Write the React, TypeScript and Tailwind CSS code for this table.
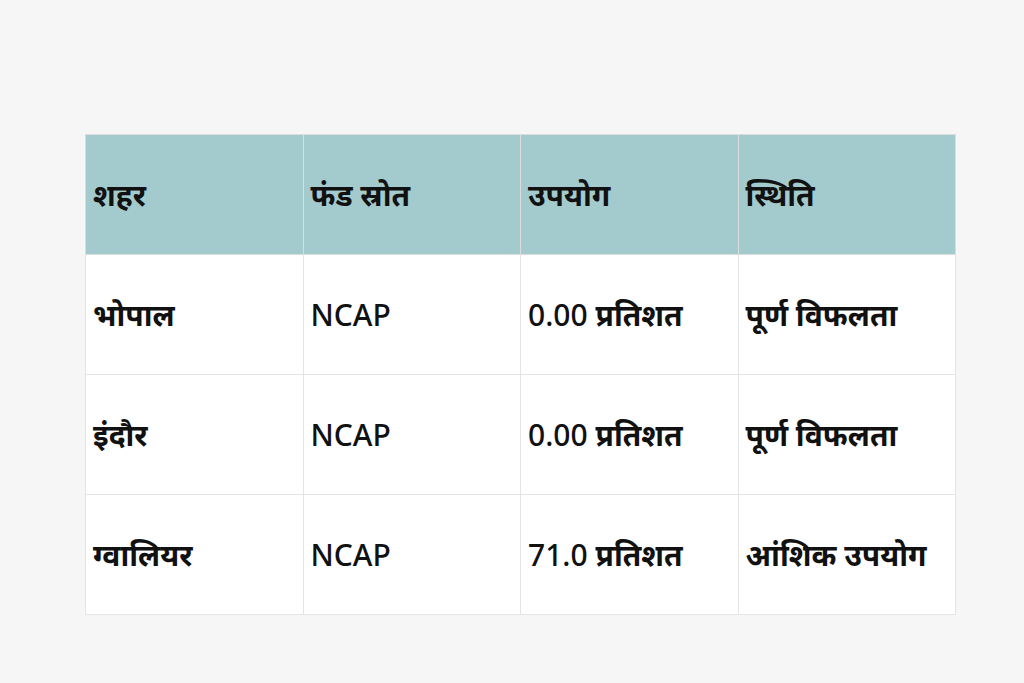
import React from "react";

const rows: React.ReactNode[][] = [
  [
    <b className="font-bold">भोपाल</b>,
    "NCAP",
    <>0.00 <b className="font-bold">प्रतिशत</b></>,
    <b className="font-bold">पूर्ण विफलता</b>,
  ],
  [
    <b className="font-bold">इंदौर</b>,
    "NCAP",
    <>0.00 <b className="font-bold">प्रतिशत</b></>,
    <b className="font-bold">पूर्ण विफलता</b>,
  ],
  [
    <b className="font-bold">ग्वालियर</b>,
    "NCAP",
    <>71.0 <b className="font-bold">प्रतिशत</b></>,
    <b className="font-bold">आंशिक उपयोग</b>,
  ],
];

export default function App() {
  return (
    <div
      className="w-[1024px] h-[683px] bg-[#f6f6f6] pt-[134px] pl-[85px]"
      style={{ fontFamily: '"Noto Sans", "Open Sans", sans-serif' }}
    >
      <table className="w-[871px] table-fixed border-collapse bg-white text-[30px] leading-none text-[#111]">
        <thead>
          <tr className="bg-[#a3cacc] h-[120px]">
            {["शहर", "फंड स्रोत", "उपयोग", "स्थिति"].map((h, i) => (
              <th
                key={i}
                className="border border-[#dcdcdc] text-left font-bold pl-[7px] pr-2 align-middle whitespace-nowrap"
              >
                {h}
              </th>
            ))}
          </tr>
        </thead>
        <tbody>
          {rows.map((r, i) => (
            <tr key={i} className="h-[120px]">
              {r.map((c, j) => (
                <td
                  key={j}
                  className="border border-[#e4e4e4] pl-[7px] pr-2 align-middle font-medium whitespace-nowrap"
                >
                  {c}
                </td>
              ))}
            </tr>
          ))}
        </tbody>
      </table>
    </div>
  );
}
